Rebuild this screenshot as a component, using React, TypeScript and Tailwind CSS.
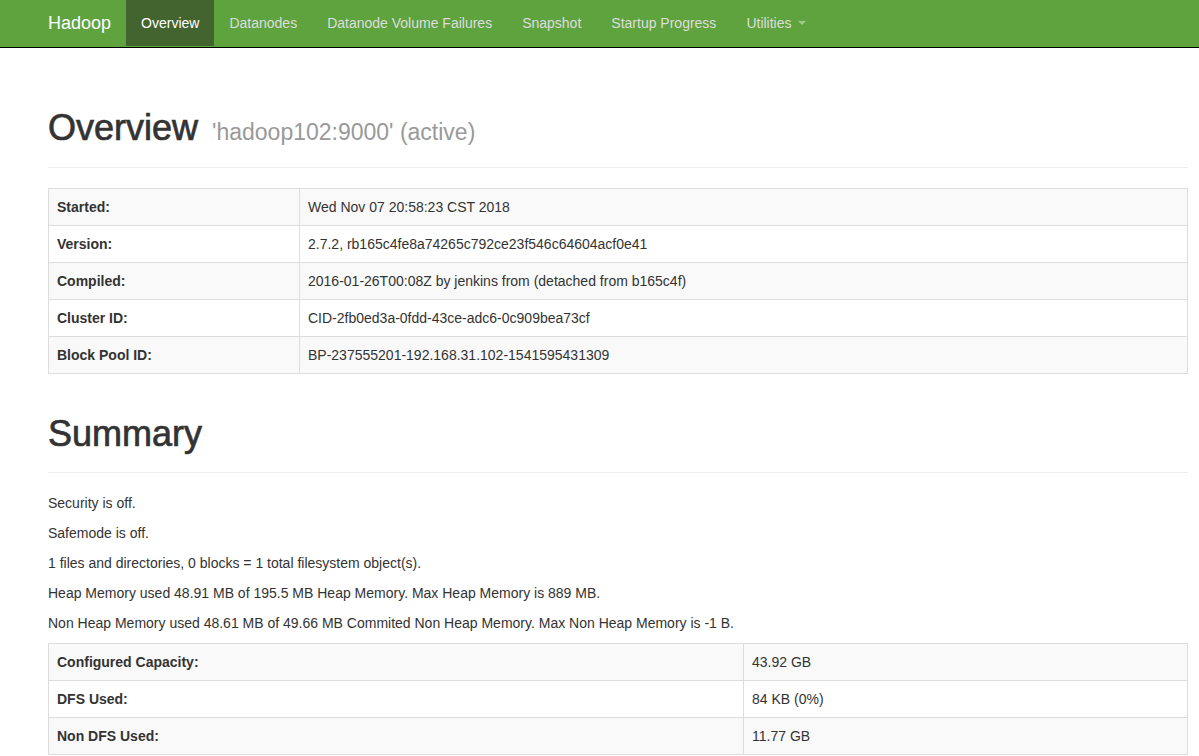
import React from "react";

const NAV_ITEMS = ["Overview", "Datanodes", "Datanode Volume Failures", "Snapshot", "Startup Progress"];

const OVERVIEW_ROWS: [string, string][] = [
  ["Started:", "Wed Nov 07 20:58:23 CST 2018"],
  ["Version:", "2.7.2, rb165c4fe8a74265c792ce23f546c64604acf0e41"],
  ["Compiled:", "2016-01-26T00:08Z by jenkins from (detached from b165c4f)"],
  ["Cluster ID:", "CID-2fb0ed3a-0fdd-43ce-adc6-0c909bea73cf"],
  ["Block Pool ID:", "BP-237555201-192.168.31.102-1541595431309"],
];

// only the rows that fit in the viewport
const SUMMARY_ROWS: [string, string][] = [
  ["Configured Capacity:", "43.92 GB"],
  ["DFS Used:", "84 KB (0%)"],
  ["Non DFS Used:", "11.77 GB"],
];

const SUMMARY_LINES = [
  "Security is off.",
  "Safemode is off.",
  "1 files and directories, 0 blocks = 1 total filesystem object(s).",
  "Heap Memory used 48.91 MB of 195.5 MB Heap Memory. Max Heap Memory is 889 MB.",
  "Non Heap Memory used 48.61 MB of 49.66 MB Commited Non Heap Memory. Max Non Heap Memory is -1 B.",
];

function InfoTable({ rows, labelWidth }: { rows: [string, string][]; labelWidth: string }) {
  return (
    <table className="w-full border-collapse border border-[#ddd] mb-5 text-sm">
      <tbody>
        {rows.map(([k, v], i) => (
          <tr key={k} className={i % 2 === 0 ? "bg-[#f9f9f9]" : "bg-white"}>
            <th className={`${labelWidth} border border-[#ddd] px-2 py-2 text-left font-bold leading-5`}>{k}</th>
            <td className="border border-[#ddd] px-2 py-2 leading-5">{v}</td>
          </tr>
        ))}
      </tbody>
    </table>
  );
}

function PageHeader({ title, sub }: { title: string; sub?: string }) {
  return (
    <div className="pb-[9px] mb-5 border-b border-[#eee]">
      <h1 className="text-[36px] leading-[1.1] mb-[10px] font-medium [-webkit-text-stroke:0.7px_#333]">
        {title}
        {sub ? (
          <small className="text-[23px] text-[#999] font-normal ml-[14px] [-webkit-text-stroke:0]">{sub}</small>
        ) : null}
      </h1>
    </div>
  );
}

export default function App() {
  return (
    <div className="min-h-[756px] bg-white text-[#333] font-['Liberation_Sans','Helvetica_Neue',Arial,sans-serif]">
      <nav className="h-[48px] bg-[#5fa33e] border-b border-black">
        <div className="flex h-[46px] items-stretch pl-[48px]">
          <a className="flex items-center pr-[15px] text-[18px] text-white">Hadoop</a>
          <ul className="flex items-stretch text-sm">
            {NAV_ITEMS.map((item, i) => (
              <li key={item}>
                <a
                  className={`flex h-full items-center px-[15px] ${
                    i === 0 ? "bg-[#43632f] text-white" : "text-[#ddd]"
                  }`}
                >
                  {item}
                </a>
              </li>
            ))}
            <li>
              <a className="flex h-full items-center px-[15px] text-[#ddd]">
                Utilities
                <span className="ml-[6px] inline-block h-0 w-0 border-x-[4px] border-t-[4px] border-x-transparent border-t-[#9fc98a]" />
              </a>
            </li>
          </ul>
        </div>
      </nav>

      <div className="w-[1140px] ml-[48px] pt-[60px]">
        <PageHeader title="Overview" sub="'hadoop102:9000' (active)" />
        <InfoTable rows={OVERVIEW_ROWS} labelWidth="w-[251px]" />

        <div className="pt-5">
          <PageHeader title="Summary" />
        </div>
        {SUMMARY_LINES.map((line) => (
          <p key={line} className="text-sm leading-5 mb-[10px]">
            {line}
          </p>
        ))}
        <InfoTable rows={SUMMARY_ROWS} labelWidth="w-[695px]" />
      </div>
    </div>
  );
}
